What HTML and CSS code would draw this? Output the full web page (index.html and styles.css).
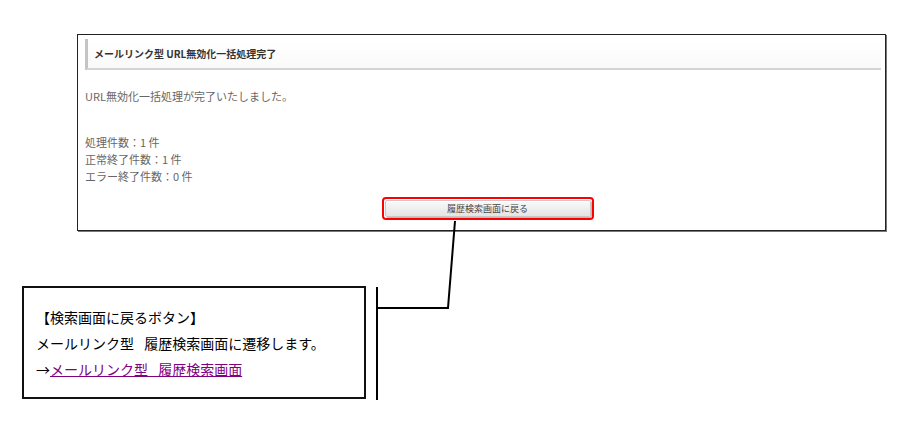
FILE: index.html
```html
<!DOCTYPE html>
<html lang="ja">
<head>
    <meta charset="UTF-8">
    <title>メールリンク型 URL無効化一括処理完了</title>
    <link rel="stylesheet" href="styles.css">
</head>
<body>
    <div class="page">
        <div class="screen">
            <div class="screen-title">メールリンク型 URL無効化一括処理完了</div>
            <p class="done-msg">URL無効化一括処理が完了いたしました。</p>
            <div class="counts">
                <div>処理件数：1 件</div>
                <div>正常終了件数：1 件</div>
                <div>エラー終了件数：0 件</div>
            </div>
            <div class="btn-row">
                <span class="highlight">
                    <button class="back-btn">履歴検索画面に戻る</button>
                </span>
            </div>
        </div>

        <div class="note">
            <p>【検索画面に戻るボタン】</p>
            <p>メールリンク型&ensp;&nbsp;履歴検索画面に遷移します。</p>
            <p>→<a href="#">メールリンク型&ensp;&nbsp;履歴検索画面</a></p>
        </div>

        <!-- callout lines from the button to the note -->
        <svg class="callout" width="919" height="446" viewBox="0 0 919 446">
            <polyline points="455,221 448,308 377,308" fill="none" stroke="#000" stroke-width="2"/>
            <line x1="377" y1="287" x2="377" y2="400" stroke="#000" stroke-width="2"/>
        </svg>
    </div>
</body>
</html>
```

FILE: styles.css
```css
body {
    margin: 0;
    background: #fff;
    font-family: "Noto Sans CJK JP", "Noto Sans", sans-serif;
}
.page {
    position: relative;
    width: 919px;
    height: 446px;
    padding-top: 34px;
    box-sizing: border-box;
}

/* captured screen */
.screen {
    margin-left: 77px;
    width: 809px;
    height: 197px;
    box-sizing: border-box;
    border: 1px solid #222;
    box-shadow: 1px 1px 0 #777;
    padding: 4px 4px 0 7px;
    color: #666;
    font-size: 11px;
}
.screen-title {
    height: 29px;
    line-height: 29px;
    border-left: 3px solid #c4c4c4;
    border-bottom: 2px solid #d4d4d4;
    background: linear-gradient(#fff, #fafafa);
    padding-left: 6px;
    font-size: 10px;
    font-weight: bold;
    color: #333;
}
.done-msg {
    margin: 18px 0 0;
    line-height: 17px;
}
.counts {
    margin-top: 29px;
    line-height: 17px;
}
.btn-row {
    display: flex;
    justify-content: center;
    margin-top: 12px;
    padding-left: 9px;
}
.highlight {
    display: block;
    border: 2px solid #f00;
    border-radius: 4px;
    padding: 1px;
}
.back-btn {
    display: block;
    width: 206px;
    height: 17px;
    padding: 0;
    border: 1px solid #c8c8c8;
    border-radius: 2px;
    background: linear-gradient(#fafafa, #e4e4e4);
    box-shadow: 1px 1px 0 #bbb;
    font-family: "Noto Sans CJK JP", sans-serif;
    font-size: 9px;
    color: #444;
}

/* explanation box */
.note {
    margin: 55px 0 0 22px;
    width: 344px;
    height: 113px;
    box-sizing: border-box;
    border: 2px solid #111;
    padding: 16px 0 0 12px;
    font-size: 14px;
    color: #000;
}
.note p {
    margin: 0;
    line-height: 26px;
}
.note a {
    color: #800080;
}
.callout {
    position: absolute;
    top: 0;
    left: 0;
}
```
